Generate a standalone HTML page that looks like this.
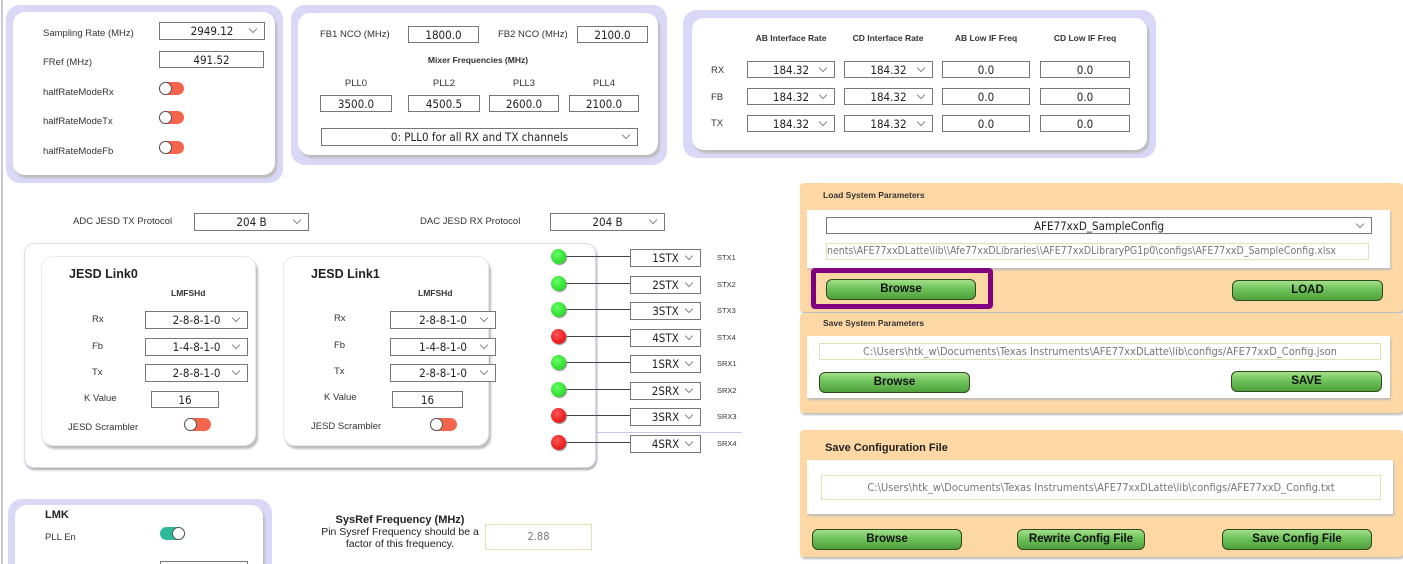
<!DOCTYPE html><html><head><style>
*{box-sizing:border-box;margin:0;padding:0}
html,body{width:1403px;height:564px;overflow:hidden}
body{background:#fff;position:relative;font-family:"Liberation Sans",Arial,sans-serif;color:#222}
.a{position:absolute}
.lab{position:absolute;font-size:9.5px;color:#333}
.b{font-weight:bold}
.box{position:absolute;border:1px solid #777;background:#fff;font-size:11.5px;text-align:center;line-height:16px;font-family:"DejaVu Sans Condensed","DejaVu Sans",sans-serif;color:#222}
.sel::after{content:"";position:absolute;right:8px;top:3px;width:5px;height:5px;border-right:1px solid #888;border-bottom:1px solid #888;transform:rotate(45deg)}
.outer{position:absolute;background:#d9d9f7;border-radius:14px}
.inner{position:absolute;background:#fff;border-radius:12px;box-shadow:2px 3px 2px #bbb}
.tg{position:absolute;width:25px;height:13px;border-radius:7px;background:#f5654d}
.tg::before{content:"";position:absolute;left:0;top:0;width:13px;height:13px;border-radius:50%;background:#fff;border:1px solid #555;box-sizing:border-box}
.tg.on{background:#2eb89a}
.tg.on::before{left:12px}
.led{position:absolute;width:15px;height:15px;border-radius:50%;box-shadow:1px 1px 1px #888}
.g{background:radial-gradient(circle at 40% 35%,#6f6,#1c1)}
.r{background:radial-gradient(circle at 40% 35%,#f55,#d00)}
.ln{position:absolute;height:1px;background:#444}
.btn{position:absolute;height:21px;border:1px solid #2d4a1c;border-radius:6px;background:linear-gradient(#a3e08a,#6ec25a 45%,#4fa03c);font-weight:bold;font-size:11.5px;text-align:center;line-height:19px;color:#111}
.or{position:absolute;background:#fdd8a4;border-radius:4px;box-shadow:1px 2px 2px #bbb}
.wh{position:absolute;background:#fff;box-shadow:1px 2px 2px #bbb}
.pb{position:absolute;border:1px solid #e6e0b8;background:#fff;font-size:11px;color:#777;text-align:center;line-height:15px;white-space:nowrap;overflow:hidden;font-family:"DejaVu Sans Condensed","DejaVu Sans",sans-serif}
</style></head><body>
<div class="a" style="left:1px;top:0;width:2px;height:564px;background:#c8c8d8"></div>

<div class="outer" style="left:6px;top:5px;width:277px;height:178px"></div>
<div class="inner" style="left:13px;top:12px;width:262px;height:163px"></div>
<div class="lab" style="left:43px;top:28px">Sampling Rate (MHz)</div>
<div class="box sel" style="left:159px;top:22px;width:106px;height:18px">2949.12</div>
<div class="lab" style="left:43px;top:57px">FRef (MHz)</div>
<div class="box" style="left:159px;top:51px;width:105px;height:17px">491.52</div>
<div class="lab" style="left:43px;top:87px">halfRateModeRx</div><div class="tg" style="left:159px;top:82px"></div>
<div class="lab" style="left:43px;top:116px">halfRateModeTx</div><div class="tg" style="left:159px;top:111px"></div>
<div class="lab" style="left:43px;top:146px">halfRateModeFb</div><div class="tg" style="left:159px;top:141px"></div>

<div class="outer" style="left:291px;top:5px;width:376px;height:160px"></div>
<div class="inner" style="left:298px;top:13px;width:360px;height:142px"></div>
<div class="lab" style="left:320px;top:29px">FB1 NCO (MHz)</div>
<div class="box" style="left:408px;top:26px;width:71px;height:17px">1800.0</div>
<div class="lab" style="left:498px;top:29px">FB2 NCO (MHz)</div>
<div class="box" style="left:577px;top:26px;width:71px;height:17px">2100.0</div>
<div class="lab b" style="left:398px;top:55px;width:160px;text-align:center;font-size:8.5px">Mixer Frequencies (MHz)</div>
<div class="lab" style="left:320px;top:78px;width:72px;text-align:center">PLL0</div>
<div class="lab" style="left:408px;top:78px;width:72px;text-align:center">PLL2</div>
<div class="lab" style="left:489px;top:78px;width:70px;text-align:center">PLL3</div>
<div class="lab" style="left:569px;top:78px;width:70px;text-align:center">PLL4</div>
<div class="box" style="left:320px;top:95px;width:72px;height:17px">3500.0</div>
<div class="box" style="left:408px;top:95px;width:72px;height:17px">4500.5</div>
<div class="box" style="left:489px;top:95px;width:70px;height:17px">2600.0</div>
<div class="box" style="left:569px;top:95px;width:70px;height:17px">2100.0</div>
<div class="box sel" style="left:321px;top:128px;width:317px;height:18px">0: PLL0 for all RX and TX channels</div>

<div class="outer" style="left:683px;top:10px;width:473px;height:148px"></div>
<div class="inner" style="left:692px;top:18px;width:455px;height:132px"></div>
<div class="lab b" style="left:747px;top:33px;width:88px;text-align:center;font-size:8.5px">AB Interface Rate</div>
<div class="lab b" style="left:844px;top:33px;width:88px;text-align:center;font-size:8.5px">CD Interface Rate</div>
<div class="lab b" style="left:942px;top:33px;width:88px;text-align:center;font-size:8.5px">AB Low IF Freq</div>
<div class="lab b" style="left:1040px;top:33px;width:90px;text-align:center;font-size:8.5px">CD Low IF Freq</div>
<div class="lab" style="left:711px;top:65px">RX</div><div class="lab" style="left:711px;top:92px">FB</div><div class="lab" style="left:711px;top:118px">TX</div>
<div class="box sel" style="left:747px;top:61px;width:88px;height:17px">184.32</div><div class="box sel" style="left:844px;top:61px;width:89px;height:17px">184.32</div><div class="box" style="left:942px;top:61px;width:88px;height:17px">0.0</div><div class="box" style="left:1040px;top:61px;width:90px;height:17px">0.0</div>
<div class="box sel" style="left:747px;top:88px;width:88px;height:17px">184.32</div><div class="box sel" style="left:844px;top:88px;width:89px;height:17px">184.32</div><div class="box" style="left:942px;top:88px;width:88px;height:17px">0.0</div><div class="box" style="left:1040px;top:88px;width:90px;height:17px">0.0</div>
<div class="box sel" style="left:747px;top:115px;width:88px;height:17px">184.32</div><div class="box sel" style="left:844px;top:115px;width:89px;height:17px">184.32</div><div class="box" style="left:942px;top:115px;width:88px;height:17px">0.0</div><div class="box" style="left:1040px;top:115px;width:90px;height:17px">0.0</div>

<div class="lab" style="left:73px;top:216px">ADC JESD TX Protocol</div>
<div class="box sel" style="left:194px;top:213px;width:115px;height:18px">204 B</div>
<div class="lab" style="left:420px;top:216px">DAC JESD RX Protocol</div>
<div class="box sel" style="left:550px;top:213px;width:115px;height:18px">204 B</div>

<div class="a" style="left:24px;top:243px;width:572px;height:225px;border:1px solid #dcdcf0;border-radius:10px;box-shadow:1px 2px 2px #aaa;background:#fff"></div>
<div class="inner" style="left:41px;top:256px;width:215px;height:190px;border:1px solid #e8e8f4"></div>
<div class="inner" style="left:283px;top:256px;width:206px;height:190px;border:1px solid #e8e8f4"></div>
<div class="a b" style="left:69px;top:267px;font-size:12.5px">JESD Link0</div>
<div class="a b" style="left:311px;top:267px;font-size:12.5px">JESD Link1</div>
<div class="lab b" style="left:171px;top:288px;font-size:8.5px">LMFSHd</div>
<div class="lab b" style="left:418px;top:288px;font-size:8.5px">LMFSHd</div>
<div class="lab" style="left:92px;top:314px">Rx</div><div class="lab" style="left:92px;top:341px">Fb</div><div class="lab" style="left:92px;top:367px">Tx</div>
<div class="lab" style="left:84px;top:393px">K Value</div><div class="lab" style="left:68px;top:422px">JESD Scrambler</div>
<div class="box sel" style="left:145px;top:311px;width:103px;height:18px">2-8-8-1-0</div>
<div class="box sel" style="left:145px;top:338px;width:103px;height:18px">1-4-8-1-0</div>
<div class="box sel" style="left:145px;top:364px;width:103px;height:18px">2-8-8-1-0</div>
<div class="box" style="left:151px;top:391px;width:68px;height:17px">16</div>
<div class="tg" style="left:184px;top:418px;width:27px"></div>
<div class="lab" style="left:334px;top:313px">Rx</div><div class="lab" style="left:334px;top:340px">Fb</div><div class="lab" style="left:334px;top:366px">Tx</div>
<div class="lab" style="left:324px;top:392px">K Value</div><div class="lab" style="left:311px;top:421px">JESD Scrambler</div>
<div class="box sel" style="left:390px;top:311px;width:106px;height:18px">2-8-8-1-0</div>
<div class="box sel" style="left:390px;top:338px;width:106px;height:18px">1-4-8-1-0</div>
<div class="box sel" style="left:390px;top:364px;width:106px;height:18px">2-8-8-1-0</div>
<div class="box" style="left:392px;top:391px;width:71px;height:17px">16</div>
<div class="tg" style="left:430px;top:418px;width:27px"></div>

<div class="a" style="left:596px;top:432px;width:146px;height:1px;background:#c8c8f0"></div>
<div class="ln" style="left:560px;top:256px;width:70px"></div><div class="led g" style="left:551px;top:249px"></div><div class="box sel" style="left:630px;top:249px;width:71px;height:18px">1STX</div><div class="lab" style="left:717px;top:253px;font-size:7.5px">STX1</div>
<div class="ln" style="left:560px;top:283px;width:70px"></div><div class="led g" style="left:551px;top:276px"></div><div class="box sel" style="left:630px;top:276px;width:71px;height:18px">2STX</div><div class="lab" style="left:717px;top:280px;font-size:7.5px">STX2</div>
<div class="ln" style="left:560px;top:309px;width:70px"></div><div class="led g" style="left:551px;top:302px"></div><div class="box sel" style="left:630px;top:302px;width:71px;height:18px">3STX</div><div class="lab" style="left:717px;top:306px;font-size:7.5px">STX3</div>
<div class="ln" style="left:560px;top:336px;width:70px"></div><div class="led r" style="left:551px;top:329px"></div><div class="box sel" style="left:630px;top:329px;width:71px;height:18px">4STX</div><div class="lab" style="left:717px;top:333px;font-size:7.5px">STX4</div>
<div class="ln" style="left:560px;top:362px;width:70px"></div><div class="led g" style="left:551px;top:355px"></div><div class="box sel" style="left:630px;top:355px;width:71px;height:18px">1SRX</div><div class="lab" style="left:717px;top:359px;font-size:7.5px">SRX1</div>
<div class="ln" style="left:560px;top:389px;width:70px"></div><div class="led g" style="left:551px;top:382px"></div><div class="box sel" style="left:630px;top:382px;width:71px;height:18px">2SRX</div><div class="lab" style="left:717px;top:386px;font-size:7.5px">SRX2</div>
<div class="ln" style="left:560px;top:415px;width:70px"></div><div class="led r" style="left:551px;top:408px"></div><div class="box sel" style="left:630px;top:408px;width:71px;height:18px">3SRX</div><div class="lab" style="left:717px;top:412px;font-size:7.5px">SRX3</div>
<div class="ln" style="left:560px;top:442px;width:70px"></div><div class="led r" style="left:551px;top:435px"></div><div class="box sel" style="left:630px;top:435px;width:71px;height:18px">4SRX</div><div class="lab" style="left:717px;top:439px;font-size:7.5px">SRX4</div>

<div class="or" style="left:800px;top:183px;width:603px;height:129px"></div>
<div class="lab b" style="left:823px;top:190px;font-size:8.5px">Load System Parameters</div>
<div class="wh" style="left:807px;top:210px;width:583px;height:58px"></div>
<div class="box sel" style="left:826px;top:217px;width:546px;height:17px">AFE77xxD_SampleConfig</div>
<div class="pb" style="left:826px;top:243px;width:543px;height:17px;text-align:left;font-size:10.5px">nents\AFE77xxDLatte\lib\\Afe77xxDLibraries\\AFE77xxDLibraryPG1p0\configs\AFE77xxD_SampleConfig.xlsx</div>
<div class="a" style="left:811px;top:268px;width:182px;height:41px;border:5px solid #800080;border-radius:4px"></div>
<div class="btn" style="left:826px;top:279px;width:150px">Browse</div>
<div class="btn" style="left:1232px;top:280px;width:151px">LOAD</div>

<div class="or" style="left:800px;top:313px;width:603px;height:100px"></div>
<div class="lab b" style="left:823px;top:318px;font-size:8.5px">Save System Parameters</div>
<div class="wh" style="left:807px;top:336px;width:583px;height:62px"></div>
<div class="pb" style="left:819px;top:343px;width:562px;height:17px">C:\Users\htk_w\Documents\Texas Instruments\AFE77xxDLatte\lib\configs/AFE77xxD_Config.json</div>
<div class="btn" style="left:819px;top:372px;width:151px">Browse</div>
<div class="btn" style="left:1231px;top:371px;width:151px">SAVE</div>

<div class="or" style="left:800px;top:430px;width:603px;height:127px"></div>
<div class="a b" style="left:825px;top:442px;font-size:11px">Save Configuration File</div>
<div class="wh" style="left:807px;top:460px;width:586px;height:54px"></div>
<div class="pb" style="left:821px;top:475px;width:560px;height:25px;line-height:23px">C:\Users\htk_w\Documents\Texas Instruments\AFE77xxDLatte\lib\configs/AFE77xxD_Config.txt</div>
<div class="btn" style="left:812px;top:529px;width:150px">Browse</div>
<div class="btn" style="left:1017px;top:529px;width:128px">Rewrite Config File</div>
<div class="btn" style="left:1222px;top:529px;width:150px">Save Config File</div>

<div class="outer" style="left:8px;top:499px;width:264px;height:80px"></div>
<div class="inner" style="left:15px;top:505px;width:248px;height:70px"></div>
<div class="a b" style="left:45px;top:509px;font-size:11px">LMK</div>
<div class="lab" style="left:45px;top:532px">PLL En</div>
<div class="tg on" style="left:160px;top:527px"></div>
<div class="a" style="left:160px;top:561px;width:88px;height:10px;border:1px solid #777"></div>
<div class="a b" style="left:300px;top:514px;width:200px;text-align:center;font-size:11px">SysRef Frequency (MHz)</div>
<div class="a" style="left:300px;top:526px;width:200px;text-align:center;font-size:10.5px;line-height:12px">Pin Sysref Frequency should be a<br>factor of this frequency.</div>
<div class="pb" style="left:485px;top:524px;width:107px;height:26px;line-height:24px;font-size:11px">2.88</div>
</body></html>
